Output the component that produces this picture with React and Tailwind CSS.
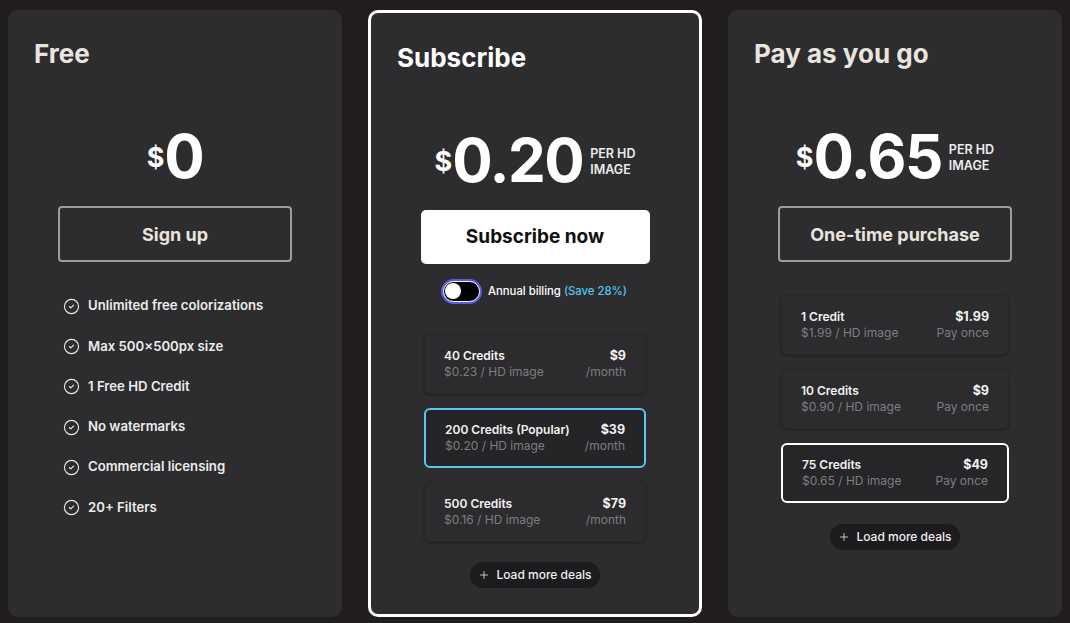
import React from "react";
import { CircleCheck, Plus } from "lucide-react";

const font = { fontFamily: "Inter, 'Noto Sans', sans-serif" };

function Price({ value, unit }) {
  return (
    <div className="flex items-center justify-center h-[60px]">
      <span className="text-[27px] font-bold text-white leading-none mt-[2px]">$</span>
      <span className="text-[60px] font-bold text-white leading-none tracking-[-1.5px]">{value}</span>
      {unit && (
        <span className="ml-[7px] text-[12.5px] font-semibold leading-[16px] text-[#ececec] mt-[4px]">
          PER HD
          <br />
          IMAGE
        </span>
      )}
    </div>
  );
}

function Deal({ name, per, price, note, variant, width }) {
  const cls =
    variant === "popular"
      ? "border-2 border-[#58c7ea] bg-[#252427]"
      : variant === "selected"
      ? "border-2 border-white bg-[#262528]"
      : "border border-[#28272a] bg-[#2c2b2d] shadow-[0_1px_3px_rgba(0,0,0,0.35)]";
  return (
    <div className={`${width} h-[60px] shrink-0 rounded-[6px] flex items-center justify-between px-[19px] whitespace-nowrap ${cls}`}>
      <div className="leading-[16px]">
        <div className="text-[12px] font-semibold text-[#f2f2f2]">{name}</div>
        <div className="text-[12px] text-[#7e7e83]">{per}</div>
      </div>
      <div className="leading-[16px] text-right">
        <div className="text-[12.5px] font-bold text-[#f2f2f2]">{price}</div>
        <div className="text-[12px] text-[#7e7e83]">{note}</div>
      </div>
    </div>
  );
}

function LoadMore({ className }) {
  return (
    <div className={`h-[26px] w-[130px] rounded-full bg-[#1c1b1d] flex items-center justify-center gap-[6px] ${className}`}>
      <Plus size={12} strokeWidth={1.6} className="text-[#e8e8e8]" />
      <span className="text-[12px] font-medium text-[#f0f0f0]">Load more deals</span>
    </div>
  );
}

const features = [
  "Unlimited free colorizations",
  "Max 500×500px size",
  "1 Free HD Credit",
  "No watermarks",
  "Commercial licensing",
  "20+ Filters",
];

export default function App() {
  return (
    <div style={font} className="w-[1070px] h-[623px] overflow-hidden bg-[#211d1f] flex gap-[26px] px-[8px] pt-[10px]">
      {/* Free */}
      <div className="w-[334px] h-[607px] rounded-[10px] bg-[#2d2c2e] flex flex-col pt-[28px] px-[26px]">
        <h2 className="text-[26px] font-bold leading-[32px] text-[#e8e4df]">Free</h2>
        <div className="mt-[56px]">
          <Price value="0" />
        </div>
        <div className="mt-[20px] mx-auto w-[234px] h-[56px] rounded-[4px] border-2 border-[#9c9c9c] flex items-center justify-center">
          <span className="text-[18px] font-bold text-[#e8e4df]">Sign up</span>
        </div>
        <ul className="mt-[24px] ml-[29px]">
          {features.map((f) => (
            <li key={f} className="h-[40.3px] flex items-center gap-[8px]">
              <CircleCheck size={17} strokeWidth={1.6} className="text-[#ececec]" />
              <span className="text-[13.2px] font-semibold text-[#ececec]">{f}</span>
            </li>
          ))}
        </ul>
      </div>

      {/* Subscribe */}
      <div className="w-[334px] h-[607px] rounded-[10px] border-[3px] border-white bg-[#2d2c2e] flex flex-col pt-[29px] px-[26px]">
        <h2 className="text-[26px] font-bold leading-[32px] text-white">Subscribe</h2>
        <div className="mt-[56px]">
          <Price value="0.20" unit />
        </div>
        <div className="mt-[20px] mx-auto w-[229px] h-[54px] rounded-[5px] bg-white flex items-center justify-center">
          <span className="text-[19px] font-bold text-[#111]">Subscribe now</span>
        </div>
        <div className="mt-[15px] flex items-center justify-center gap-[8px] h-[24px]">
          <div className="w-[37px] h-[21px] rounded-full bg-black border-[1.5px] border-white ring-2 ring-[#5d5ae8] flex items-center px-[1px]">
            <div className="w-[16px] h-[16px] rounded-full bg-white" />
          </div>
          <span className="text-[11.3px] font-medium text-white whitespace-nowrap">
            Annual billing <span className="text-[#52c6f2]">(Save 28%)</span>
          </span>
        </div>
        <div className="mt-[31px] flex flex-col items-center gap-[14px]">
          <Deal width="w-[222px]" name="40 Credits" per="$0.23 / HD image" price="$9" note="/month" />
          <Deal width="w-[222px]" name="200 Credits (Popular)" per="$0.20 / HD image" price="$39" note="/month" variant="popular" />
          <Deal width="w-[222px]" name="500 Credits" per="$0.16 / HD image" price="$79" note="/month" />
        </div>
        <LoadMore className="mt-[20px] mx-auto" />
      </div>

      {/* Pay as you go */}
      <div className="w-[334px] h-[607px] rounded-[10px] bg-[#2d2c2e] flex flex-col pt-[28px] px-[26px]">
        <h2 className="text-[26px] font-bold leading-[32px] text-[#e8e4df]">Pay as you go</h2>
        <div className="mt-[56px]">
          <Price value="0.65" unit />
        </div>
        <div className="mt-[20px] mx-auto w-[234px] h-[56px] rounded-[4px] border-2 border-[#9c9c9c] flex items-center justify-center">
          <span className="text-[18px] font-bold text-[#e8e4df]">One-time purchase</span>
        </div>
        <div className="mt-[33px] flex flex-col items-center gap-[14px]">
          <Deal width="w-[228px]" name="1 Credit" per="$1.99 / HD image" price="$1.99" note="Pay once" />
          <Deal width="w-[228px]" name="10 Credits" per="$0.90 / HD image" price="$9" note="Pay once" />
          <Deal width="w-[228px]" name="75 Credits" per="$0.65 / HD image" price="$49" note="Pay once" variant="selected" />
        </div>
        <LoadMore className="mt-[21px] mx-auto" />
      </div>
    </div>
  );
}
